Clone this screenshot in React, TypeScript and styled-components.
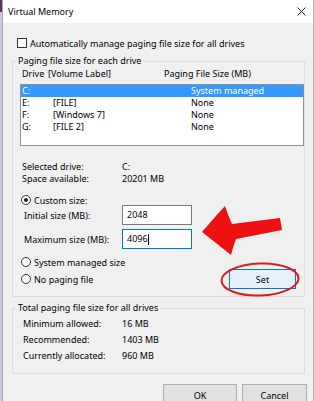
import React from "react";
import styled, { createGlobalStyle } from "styled-components";

const GlobalStyle = createGlobalStyle`
  html, body {
    margin: 0;
    padding: 0;
    width: 314px;
    height: 401px;
    overflow: hidden;
    background: #f0f0f0;
  }
  body {
    font-family: "Noto Sans", "Open Sans", sans-serif;
    font-size: 9px;
    color: #000;
  }
  * { box-sizing: border-box; }
`;

const Frame = styled.div`
  position: relative;
  display: flex;
  width: 314px;
  height: 401px;
`;

const LeftStrip = styled.div`
  flex: none;
  width: 3px;
  background: linear-gradient(to bottom, #5b3553 0, #5b3553 12px, #c4cbdb 12px);
  border-right: 1px solid #9ea6b6;
`;

const Window = styled.div`
  flex: 1;
  display: flex;
  flex-direction: column;
  border-right: 1px solid #b8b8b8;
`;

const TitleBar = styled.div`
  flex: none;
  height: 23px;
  background: #fff;
  display: flex;
  align-items: center;
  justify-content: space-between;
  padding: 0 7px 0 5px;
  font-size: 9px;
`;

const CloseIcon = () => (
  <svg width="9" height="9" viewBox="0 0 9 9">
    <path d="M0.5 0.5 L8.5 8.5 M8.5 0.5 L0.5 8.5" stroke="#222" strokeWidth="1" fill="none" />
  </svg>
);

const Body = styled.div`
  flex: 1;
  display: flex;
  flex-direction: column;
  padding: 0 8px 0 9px;
  background: #f0f0f0;
`;

const CheckRow = styled.div`
  display: flex;
  align-items: center;
  gap: 3px;
  height: 10px;
  margin-top: 15px;
  padding-left: 5px;
`;

const CheckBox = styled.span`
  width: 10px;
  height: 10px;
  border: 1px solid #333;
  background: #fff;
  flex: none;
`;

const Group = styled.div<{ $top: number; $bottom: number }>`
  display: flex;
  flex-direction: column;
  margin-top: ${(p) => p.$top}px;
  padding: 0 0 ${(p) => p.$bottom}px 7px;
  border: 1px solid #dcdcdc;
`;

const GroupTitle = styled.span`
  align-self: flex-start;
  height: 12px;
  line-height: 12px;
  margin: -7px 0 0 -4px;
  padding: 0 2px;
  background: #f0f0f0;
`;

const HeaderRow = styled.div`
  display: grid;
  grid-template-columns: 26px 116px auto;
  height: 12px;
  line-height: 12px;
  margin-top: 1px;
  padding-left: 2px;
`;

const ListBox = styled.div`
  height: 62px;
  margin-top: 4px;
  border: 1px solid #8e8f8f;
  background: #fff;
`;

const ListRow = styled.div<{ $selected?: boolean }>`
  display: grid;
  grid-template-columns: 31px 138px auto;
  height: 12px;
  line-height: 12px;
  padding-left: 1px;
  background: ${(p) => (p.$selected ? "#3399ff" : "transparent")};
  color: ${(p) => (p.$selected ? "#fff" : "#000")};
`;

const InfoRow = styled.div<{ $top: number }>`
  display: grid;
  grid-template-columns: 100px auto;
  height: 12px;
  line-height: 12px;
  margin-top: ${(p) => p.$top}px;
  padding-left: 2px;
`;

const RadioRow = styled.div<{ $top: number }>`
  display: flex;
  align-items: center;
  gap: 3px;
  height: 10px;
  margin-top: ${(p) => p.$top}px;
  padding-left: 1px;
`;

const RadioCircle = styled.span<{ $checked?: boolean }>`
  flex: none;
  width: 10px;
  height: 10px;
  border: 1px solid #333;
  border-radius: 50%;
  background: #fff;
  display: flex;
  align-items: center;
  justify-content: center;
  &::after {
    content: "";
    display: ${(p) => (p.$checked ? "block" : "none")};
    width: 4px;
    height: 4px;
    border-radius: 50%;
    background: #222;
  }
`;

const SizeRow = styled.div<{ $top: number }>`
  display: grid;
  grid-template-columns: 98px 70px;
  align-items: center;
  height: 20px;
  margin-top: ${(p) => p.$top}px;
  padding-left: 4px;
`;

const TextBox = styled.div<{ $focused?: boolean }>`
  display: flex;
  align-items: flex-start;
  height: 20px;
  padding: 3px 0 0 4px;
  line-height: 12px;
  background: #fff;
  border: 1px solid ${(p) => (p.$focused ? "#0078d7" : "#7a7a7a")};
`;

const Caret = styled.span`
  width: 1px;
  height: 11px;
  margin-top: 1px;
  background: #000;
`;

const BottomRow = styled.div`
  display: flex;
  align-items: center;
  justify-content: space-between;
  height: 20px;
  margin-top: 2px;
  padding-right: 8px;
`;

const RadioInline = styled.div`
  display: flex;
  align-items: center;
  gap: 3px;
  padding-left: 1px;
`;

const Button = styled.div<{ $w: number; $primary?: boolean }>`
  width: ${(p) => p.$w}px;
  height: ${(p) => (p.$primary ? 20 : 23)}px;
  display: flex;
  align-items: center;
  justify-content: center;
  background: ${(p) => (p.$primary ? "#e5f1fb" : "#e1e1e1")};
  border: 1px solid ${(p) => (p.$primary ? "#0078d7" : "#adadad")};
`;

const SummaryRow = styled.div<{ $top?: number }>`
  display: grid;
  grid-template-columns: 99px auto;
  height: 16px;
  line-height: 16px;
  margin-top: ${(p) => p.$top ?? 0}px;
  padding-left: 3px;
`;

const ButtonRow = styled.div`
  display: flex;
  justify-content: flex-end;
  gap: 5px;
  margin-top: 10px;
  margin-right: -2px;
`;

const Overlay = styled.svg`
  position: absolute;
  left: 0;
  top: 0;
  pointer-events: none;
`;

const drives = [
  { d: "C:", label: "", size: "System managed", selected: true },
  { d: "E:", label: "[FILE]", size: "None" },
  { d: "F:", label: "[Windows 7]", size: "None" },
  { d: "G:", label: "[FILE 2]", size: "None" },
];

export default function App() {
  return (
    <>
      <GlobalStyle />
      <Frame>
        <LeftStrip />
        <Window>
          <TitleBar>
            <span>Virtual Memory</span>
            <CloseIcon />
          </TitleBar>
          <Body>
            <CheckRow>
              <CheckBox />
              <span>Automatically manage paging file size for all drives</span>
            </CheckRow>

            <Group $top={13} $bottom={7}>
              <GroupTitle>Paging file size for each drive</GroupTitle>
              <HeaderRow>
                <span>Drive</span>
                <span>[Volume Label]</span>
                <span>Paging File Size (MB)</span>
              </HeaderRow>
              <ListBox>
                {drives.map((r) => (
                  <ListRow key={r.d} $selected={r.selected}>
                    <span>{r.d}</span>
                    <span>{r.label}</span>
                    <span>{r.size}</span>
                  </ListRow>
                ))}
              </ListBox>
              <InfoRow $top={15}>
                <span>Selected drive:</span>
                <span>C:</span>
              </InfoRow>
              <InfoRow $top={0}>
                <span>Space available:</span>
                <span>20201 MB</span>
              </InfoRow>
              <RadioRow $top={10}>
                <RadioCircle $checked />
                <span>Custom size:</span>
              </RadioRow>
              <SizeRow $top={0}>
                <span>Initial size (MB):</span>
                <TextBox>2048</TextBox>
              </SizeRow>
              <SizeRow $top={4}>
                <span>Maximum size (MB):</span>
                <TextBox $focused>
                  4096
                  <Caret />
                </TextBox>
              </SizeRow>
              <RadioRow $top={8}>
                <RadioCircle />
                <span>System managed size</span>
              </RadioRow>
              <BottomRow>
                <RadioInline>
                  <RadioCircle />
                  <span>No paging file</span>
                </RadioInline>
                <Button $w={67} $primary>
                  Set
                </Button>
              </BottomRow>
            </Group>

            <Group $top={11} $bottom={9}>
              <GroupTitle>Total paging file size for all drives</GroupTitle>
              <SummaryRow $top={2}>
                <span>Minimum allowed:</span>
                <span>16 MB</span>
              </SummaryRow>
              <SummaryRow>
                <span>Recommended:</span>
                <span>1403 MB</span>
              </SummaryRow>
              <SummaryRow>
                <span>Currently allocated:</span>
                <span>960 MB</span>
              </SummaryRow>
            </Group>

            <ButtonRow>
              <Button $w={74}>OK</Button>
              <Button $w={65}>Cancel</Button>
            </ButtonRow>
          </Body>
        </Window>
        <Overlay width="314" height="401" viewBox="0 0 314 401">
          <path
            d="M202 232 Q213 219 225 206 Q228 215 232 224 L280 218 L282 230 L236 239 Q233 247 231 255 Q216 243 202 232 Z"
            fill="#ee1111"
          />
          <ellipse
            cx="260"
            cy="279.5"
            rx="38.5"
            ry="16"
            fill="none"
            stroke="#e01a1a"
            strokeWidth="2"
            transform="rotate(-2 260 279.5)"
          />
        </Overlay>
      </Frame>
    </>
  );
}
